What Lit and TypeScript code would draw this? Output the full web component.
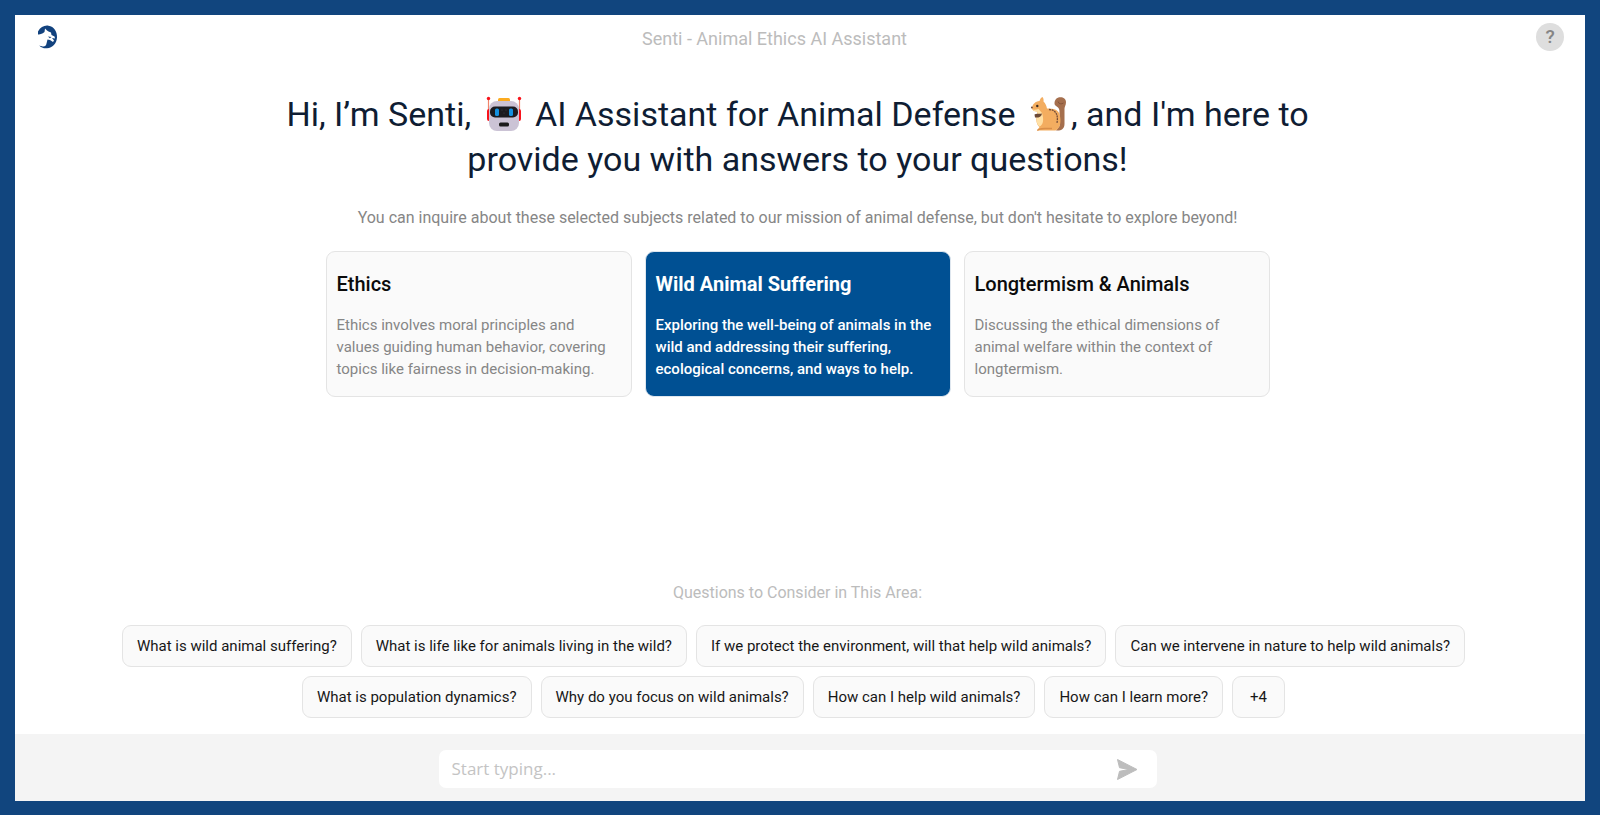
import { LitElement, html, css, svg } from "lit";
import { customElement, state } from "lit/decorators.js";
import { classMap } from "lit/directives/class-map.js";

interface Topic {
  title: string;
  text: string;
}

const TOPICS: Topic[] = [
  {
    title: "Ethics",
    text: "Ethics involves moral principles and values guiding human behavior, covering topics like fairness in decision-making.",
  },
  {
    title: "Wild Animal Suffering",
    text: "Exploring the well-being of animals in the wild and addressing their suffering, ecological concerns, and ways to help.",
  },
  {
    title: "Longtermism & Animals",
    text: "Discussing the ethical dimensions of animal welfare within the context of longtermism.",
  },
];

const QUESTIONS = [
  "What is wild animal suffering?",
  "What is life like for animals living in the wild?",
  "If we protect the environment, will that help wild animals?",
  "Can we intervene in nature to help wild animals?",
  "What is population dynamics?",
  "Why do you focus on wild animals?",
  "How can I help wild animals?",
  "How can I learn more?",
  "+4",
];

const robot = svg`
  <path d="M2.500 3V14M33.500 3V14" stroke="#f0866c" stroke-width="1.200"/>
  <circle cx="2.500" cy="2.500" r="1.700" fill="#f8141c"/><circle cx="33.500" cy="2.500" r="1.700" fill="#f8141c"/>
  <rect x="1" y="13" width="4" height="12" rx="2" fill="#f8141c"/><rect x="31" y="13" width="4" height="12" rx="2" fill="#f8141c"/>
  <rect x="12" y="2" width="12" height="5" rx="1.500" fill="#fcab20"/>
  <rect x="3" y="5" width="30" height="30" rx="8" fill="#cbc3d5"/>
  <rect x="4" y="10.500" width="28" height="11" rx="5" fill="#1b1b1f"/>
  <rect x="9" y="12.500" width="4" height="7.500" rx="1.500" fill="#1490df"/><rect x="23" y="12.500" width="4" height="7.500" rx="1.500" fill="#1490df"/>
  <g fill="#41414a"><circle cx="16" cy="14" r=".6"/><circle cx="20" cy="14" r=".6"/><circle cx="18" cy="17" r=".6"/></g>
  <rect x="13" y="26.500" width="10" height="4" rx="1.500" fill="#1c1c1c"/>`;

const squirrel = svg`
  <path d="M26 34.500C31 35 34.500 33 34.500 28V12.500C34.500 10.500 36 9.500 36 6C36 3 33.500 1.300 30.500 1.300C26.500 1.300 24.500 4 24.500 7.300C24.500 10 27.500 10.500 28.500 12C29.500 13.500 29.500 15 29.500 17V30Z" fill="#a56f4d"/>
  <path d="M28 5.500C28.500 8 31.500 8.500 33.500 7" fill="none" stroke="#86553a" stroke-width="1"/>
  <path d="M12.500 1C10.500 2 10 3.500 9.500 5C5 5.500 3 8 2 11.500C1.500 14 4 15.500 7.500 15.500L7 19.500C5.500 23 6.500 28.500 9.500 31L7 34.500H25.500C30.500 32.500 31.500 25 29.500 18C28 13.500 23.500 12.500 17 12.500C16.500 9.500 15.500 7.500 13.500 5.500C13.800 3.800 13.500 2 12.500 1Z" fill="#f3ad60"/>
  <path d="M1.800 12C3 14.500 5.500 14 8.500 13L12 17C14 23 13.500 29 9.500 30.500C6.500 28 5.500 23 7.500 19L7.500 15.500C4 15.500 2 14.200 1.800 12Z" fill="#ffe0a5"/>
  <path d="M7.500 34.700C8 32.800 10 32.500 15 32.500H22" fill="none" stroke="#d98e48" stroke-width="1.300"/>
  <path d="M19 13.500C25.500 14 28.500 18 27 27" fill="none" stroke="#744c38" stroke-width="1.300" stroke-dasharray="2 .7"/>
  <path d="M4.500 18.500C6.500 17 9.500 18.500 12 17.500C11.500 21 8 22 5 21.500Z" fill="#6c4936"/>
  <circle cx="7.300" cy="10" r="1.200" fill="#3a2c25"/><circle cx="1.900" cy="11.500" r=".9" fill="#684236"/>`;

@customElement("app-root")
export class AppRoot extends LitElement {
  @state() private selected = 1;
  @state() private draft = "";

  static styles = css`
    :host {
      display: block;
      font-family: Roboto, sans-serif;
      color: #0f1d33;
    }
    * {
      box-sizing: border-box;
    }
    button {
      font: inherit;
      color: inherit;
      cursor: pointer;
    }
    .frame {
      display: flex;
      flex-direction: column;
      min-height: 100vh;
      border: 15px solid #11457e;
      border-bottom-width: 14px;
      background: #fff;
    }
    .bar {
      display: flex;
      align-items: center;
      padding: 8px 21px 0 22px;
    }
    .logo {
      display: flex;
    }
    .name {
      flex: 1;
      margin: 0;
      padding: 4px 46px 0 0;
      text-align: center;
      font-size: 18px;
      line-height: 24px;
      font-weight: 400;
      color: #bcbcbc;
    }
    .help {
      width: 28px;
      height: 28px;
      padding: 0;
      border: 0;
      border-radius: 50%;
      background: #dedede;
      color: #858585;
      font-size: 19px;
      line-height: 28px;
      font-weight: 500;
    }
    .main {
      flex: 1;
      display: flex;
      flex-direction: column;
      align-items: center;
      padding: 41px 5px 16px 0;
    }
    .hello {
      max-width: 1060px;
      margin: 0;
      text-align: center;
      font-size: 34px;
      line-height: 45px;
      font-weight: 400;
    }
    .emoji {
      width: 36px;
      height: 36px;
      margin: 0 5px 0 6px;
      vertical-align: -6px;
    }
    .lead {
      margin: 25px 0 22px;
      font-size: 16px;
      line-height: 22px;
      color: #868686;
    }
    .cards {
      display: grid;
      grid-template-columns: repeat(3, 1fr);
      gap: 13px;
      width: 100%;
      max-width: 944px;
    }
    .card {
      display: flex;
      flex-direction: column;
      gap: 18px;
      padding: 21px 14px 16px 10px;
      border: 1px solid #e4e4e4;
      border-radius: 9px;
      background: #fafafa;
      text-align: left;
    }
    .card-title {
      font-size: 20px;
      line-height: 23px;
      font-weight: 500;
      color: #0b0b0b;
    }
    .card-text {
      font-size: 15px;
      line-height: 22px;
      color: #868686;
    }
    .card.on {
      background: #005093;
      border-color: #dfe7ef;
    }
    .card.on .card-title {
      color: #fff;
      font-weight: 700;
    }
    .card.on .card-text {
      color: #fff;
      font-weight: 500;
    }
    .asks {
      width: 100%;
      margin-top: auto;
    }
    .asks-title {
      margin: 0 0 21px;
      text-align: center;
      font-size: 16px;
      line-height: 22px;
      font-weight: 400;
      color: #bcbcbc;
    }
    .chips {
      display: flex;
      flex-wrap: wrap;
      justify-content: center;
      gap: 9px;
      padding: 0 108px 0 100px;
    }
    .chip {
      min-width: 53px;
      height: 42px;
      padding: 0 14px;
      border: 1px solid #e4e4e4;
      border-radius: 9px;
      background: #fafafa;
      color: #171717;
      font-size: 15px;
    }
    .foot {
      padding: 16px 5px 13px 0;
      background: #f4f4f4;
    }
    .entry {
      display: flex;
      align-items: center;
      max-width: 718px;
      height: 38px;
      margin: 0 auto;
      padding: 0 19px 0 13px;
      border-radius: 7px;
      background: #fff;
    }
    .field {
      flex: 1;
      min-width: 0;
      padding: 0;
      border: 0;
      outline: 0;
      background: none;
      font-family: "Open Sans", "Noto Sans", sans-serif;
      font-size: 17px;
      line-height: 24px;
      color: #222;
    }
    .field::placeholder {
      color: #c4c4c4;
      opacity: 1;
    }
    .send {
      display: flex;
      padding: 0;
      border: 0;
      background: none;
    }
  `;

  render() {
    return html`
      <div class="frame">
        <header class="bar">
          <a class="logo" href="#" aria-label="Home">
            <svg width="22" height="24" viewBox="0 0 22 24" aria-hidden="true">
              <path d="M1 6.500C3.500 2 7.500 0 11.500 .7C17 1.500 20.300 6.500 20 12.500C19.600 18.500 15.500 23 10 23.300C6.500 23.500 3.800 22.500 2.300 20.500C5.500 22 9 21 9 18C9 15.500 6.500 13.500 3.500 12L1 9.500Z" fill="#12427e"/>
              <path d="M0 9.800C2.500 9.600 5.500 8.800 7.500 7L8 3.500L10 5.500L11.500 6.500L14 7.500L14.500 10L17.500 11.500L18 13.500L15 13L17 15.500L16 17L13 15L10.500 14.500L9.500 18.500C9.200 21 7 22 4.500 21L0 18Z" fill="#fff"/>
              <path d="M11 11.500L14.500 12L12.800 13.300Z" fill="#12427e"/>
            </svg>
          </a>
          <h1 class="name">Senti - Animal Ethics AI Assistant</h1>
          <button class="help" type="button" aria-label="Help">?</button>
        </header>

        <main class="main">
          <h2 class="hello">
            Hi, I’m Senti,
            <svg class="emoji" viewBox="0 0 36 36" role="img" aria-label="robot">${robot}</svg>
            AI Assistant for Animal Defense
            <svg class="emoji" viewBox="0 0 36 36" role="img" aria-label="squirrel">${squirrel}</svg>, and I'm here to
            provide you with answers to your questions!
          </h2>
          <p class="lead">
            You can inquire about these selected subjects related to our mission of animal defense, but don't hesitate to
            explore beyond!
          </p>
          <div class="cards">
            ${TOPICS.map(
              (t, i) => html`
                <button
                  type="button"
                  class=${classMap({ card: true, on: i === this.selected })}
                  @click=${() => (this.selected = i)}
                >
                  <span class="card-title">${t.title}</span>
                  <span class="card-text">${t.text}</span>
                </button>
              `,
            )}
          </div>

          <section class="asks">
            <h3 class="asks-title">Questions to Consider in This Area:</h3>
            <div class="chips">
              ${QUESTIONS.map(
                (q) => html`<button type="button" class="chip" @click=${() => (this.draft = q)}>${q}</button>`,
              )}
            </div>
          </section>
        </main>

        <footer class="foot">
          <form class="entry" @submit=${(e: Event) => e.preventDefault()}>
            <input
              class="field"
              type="text"
              aria-label="Your question"
              placeholder="Start typing..."
              .value=${this.draft}
            />
            <button class="send" type="submit" aria-label="Send">
              <svg width="22" height="22" viewBox="0 0 22 22" aria-hidden="true">
                <path d="M1.500 1.500L21 11.500L1.500 21.500L3.500 13.300L13 11.500L3.500 9.700Z" fill="#bdbdbd" stroke="#bdbdbd" stroke-width="1" stroke-linejoin="round"/>
              </svg>
            </button>
          </form>
        </footer>
      </div>
    `;
  }
}
